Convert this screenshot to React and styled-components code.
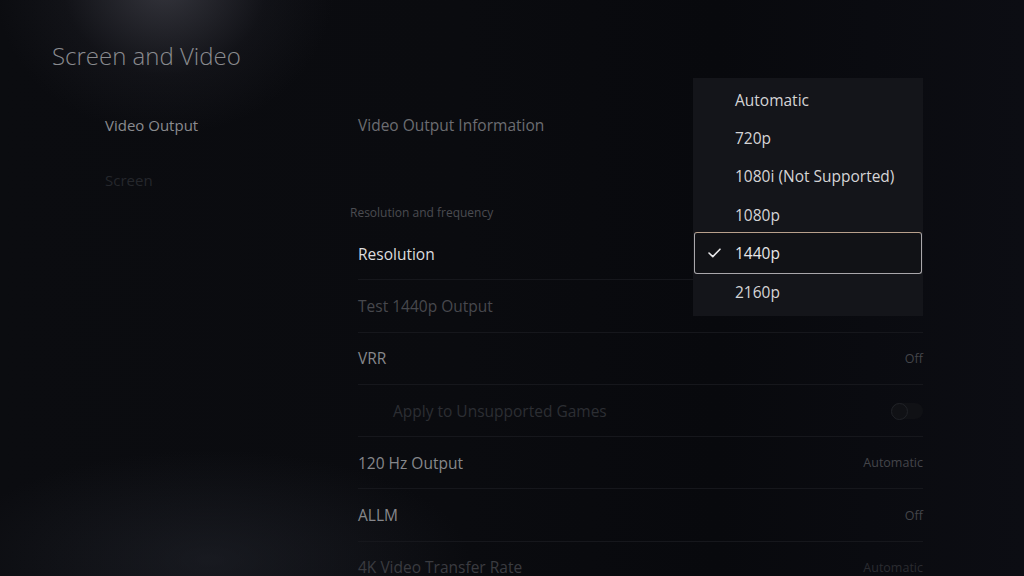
import React from "react";
import styled, { createGlobalStyle } from "styled-components";

const Global = createGlobalStyle`
  html, body { margin: 0; padding: 0; background: #08090d; }
  body { font-family: "Open Sans", "Noto Sans", sans-serif; }
  * { box-sizing: border-box; }
`;

const Page = styled.div`
  position: relative;
  width: 1024px;
  height: 576px;
  overflow: hidden;
  background:
    radial-gradient(ellipse 170px 150px at 165px -15px, rgba(80, 80, 90, 0.6), rgba(45, 45, 54, 0.2) 60%, transparent 100%),
    radial-gradient(ellipse 260px 110px at 210px 560px, rgba(40, 43, 52, 0.45), transparent 100%),
    linear-gradient(90deg, #0b0c10 0%, #0a0b0f 45%, #08090d 70%, #0c0d13 100%);
  color: #d8d8d8;
`;

const Title = styled.h1`
  margin: 0;
  padding: 39px 0 0 52px;
  height: 99px;
  font-size: 24px;
  font-weight: 300;
  color: #8a8b8f;
`;

const Body = styled.div`
  display: flex;
`;

const Nav = styled.nav`
  width: 350px;
  padding-left: 105px;
  display: flex;
  flex-direction: column;
`;

const NavItem = styled.div`
  height: 55px;
  display: flex;
  align-items: center;
  margin-top: ${(p) => (p.first ? "-2px" : "0")};
  font-size: 15px;
  color: ${(p) => (p.active ? "#8a8b8f" : "#25272c")};
`;

const Main = styled.main`
  width: 573px;
  display: flex;
  flex-direction: column;
`;

const InfoRow = styled.div`
  height: 52px;
  margin-left: 8px;
  display: flex;
  align-items: center;
  font-size: 15.5px;
  color: #6c6d72;
`;

const SectionLabel = styled.div`
  margin-top: 53px;
  height: 16px;
  margin-bottom: 8px;
  display: flex;
  align-items: center;
  font-size: 12px;
  color: #4b4c51;
`;

const Row = styled.div`
  height: 52.3px;
  flex-shrink: 0;
  margin-left: 8px;
  padding-left: ${(p) => (p.indent ? "35px" : "0")};
  display: flex;
  align-items: center;
  justify-content: space-between;
  border-bottom: 1px solid #16171c;
  font-size: 15.5px;
  color: ${(p) => p.color};
`;

const Value = styled.span`
  font-size: 12.5px;
  color: ${(p) => p.color || "#3c3d42"};
`;

const Toggle = styled.span`
  position: relative;
  width: 32px;
  height: 16px;
  border-radius: 8px;
  background: #101115;
  &::before {
    content: "";
    position: absolute;
    left: 0;
    top: 0;
    width: 15px;
    height: 15px;
    border-radius: 50%;
    border: 1.5px solid #202227;
  }
`;

const Dropdown = styled.ul`
  position: absolute;
  left: 693px;
  top: 78px;
  width: 230px;
  height: 238px;
  margin: 0;
  padding: 2.5px 0 0 0;
  list-style: none;
  background: #14151a;
`;

const Option = styled.li`
  position: relative;
  height: 38.4px;
  display: flex;
  align-items: center;
  padding-left: 42px;
  font-size: 15.5px;
  color: #d4d4d6;
  ${(p) =>
    p.selected &&
    `
    color: #e6e6e8;
    &::after {
      content: "";
      position: absolute;
      left: 1px;
      right: 1px;
      top: -2px;
      bottom: -2px;
      border-radius: 3px;
      border: 1.5px solid #a9a7ab;
      border-top-color: #b8a08c;
      background: #111216;
      z-index: 0;
    }
  `}
`;

const OptionText = styled.span`
  position: relative;
  z-index: 1;
`;

const Check = styled.svg`
  position: absolute;
  left: 15px;
  top: 50%;
  transform: translateY(-50%);
  z-index: 1;
`;

const options = ["Automatic", "720p", "1080i (Not Supported)", "1080p", "1440p", "2160p"];

export default function App() {
  return (
    <>
      <Global />
      <Page>
        <Title>Screen and Video</Title>
        <Body>
          <Nav>
            <NavItem active first>Video Output</NavItem>
            <NavItem>Screen</NavItem>
          </Nav>
          <Main>
            <InfoRow>Video Output Information</InfoRow>
            <SectionLabel>Resolution and frequency</SectionLabel>
            <Row color="#dcdcde">Resolution</Row>
            <Row color="#47484d">Test 1440p Output</Row>
            <Row color="#86878b">
              VRR<Value color="#44454a">Off</Value>
            </Row>
            <Row color="#2c2e33" indent>
              Apply to Unsupported Games<Toggle />
            </Row>
            <Row color="#86878b">
              120 Hz Output<Value color="#44454a">Automatic</Value>
            </Row>
            <Row color="#86878b">
              ALLM<Value color="#44454a">Off</Value>
            </Row>
            <Row color="#3a3b40">
              4K Video Transfer Rate<Value color="#2a2b30">Automatic</Value>
            </Row>
          </Main>
        </Body>
        <Dropdown>
          {options.map((o) => (
            <Option key={o} selected={o === "1440p"}>
              {o === "1440p" && (
                <Check width="13" height="10" viewBox="0 0 13 10">
                  <polyline points="1,5 4.8,8.6 12,1.2" fill="none" stroke="#e8e8ea" strokeWidth="1.6" strokeLinecap="round" strokeLinejoin="round" />
                </Check>
              )}
              <OptionText>{o}</OptionText>
            </Option>
          ))}
        </Dropdown>
      </Page>
    </>
  );
}
